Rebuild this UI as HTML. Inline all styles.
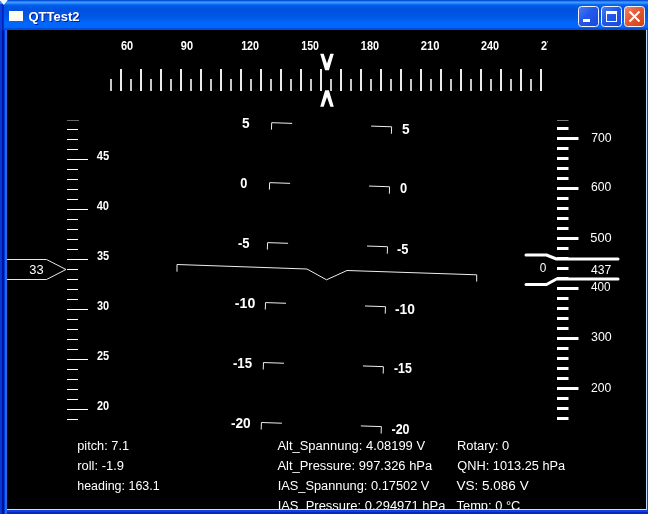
<!DOCTYPE html>
<html><head><meta charset="utf-8"><style>
html,body{margin:0;padding:0;width:648px;height:514px;overflow:hidden;background:#fff;}
svg{display:block;will-change:transform}
text{font-family:"Liberation Sans",sans-serif;}
</style></head><body>
<svg width="648" height="514" viewBox="0 0 648 514">
<defs>
<linearGradient id="tb" x1="0" y1="0" x2="0" y2="1">
<stop offset="0" stop-color="#0040c8"/>
<stop offset="0.04" stop-color="#0a6cf8"/>
<stop offset="0.08" stop-color="#3a96ff"/>
<stop offset="0.14" stop-color="#0a6af5"/>
<stop offset="0.2" stop-color="#0058e8"/>
<stop offset="0.5" stop-color="#0052e2"/>
<stop offset="0.75" stop-color="#0064fa"/>
<stop offset="0.88" stop-color="#0068ff"/>
<stop offset="0.94" stop-color="#0050e0"/>
<stop offset="1" stop-color="#0038c8"/>
</linearGradient>
<linearGradient id="btn" x1="0" y1="0" x2="1" y2="1">
<stop offset="0" stop-color="#4a7cf4"/>
<stop offset="0.45" stop-color="#2258ea"/>
<stop offset="1" stop-color="#1848d8"/>
</linearGradient>
<linearGradient id="cls" x1="0" y1="0" x2="1" y2="1">
<stop offset="0" stop-color="#f08a70"/>
<stop offset="0.4" stop-color="#e65c38"/>
<stop offset="1" stop-color="#d04010"/>
</linearGradient>
<clipPath id="hdg"><rect x="105" y="30" width="443" height="80"/></clipPath>
</defs>

<rect x="0" y="0" width="648" height="514" fill="#0a4ee0"/>
<rect x="0" y="0" width="648" height="1" fill="#0850d8"/>
<rect x="0" y="1" width="648" height="1" fill="#2a80f0"/>
<rect x="0" y="2" width="648" height="1" fill="#3898ff"/>
<rect x="0" y="3" width="648" height="1" fill="#2a88f8"/>
<rect x="0" y="4" width="648" height="1" fill="#0a6af0"/>
<rect x="0" y="5" width="648" height="1" fill="#005ef0"/>
<rect x="0" y="6" width="648" height="1" fill="#0058e8"/>
<rect x="0" y="7" width="648" height="1" fill="#0056e4"/>
<rect x="0" y="8" width="648" height="1" fill="#0052e0"/>
<rect x="0" y="9" width="648" height="1" fill="#0052e0"/>
<rect x="0" y="10" width="648" height="1" fill="#0052e0"/>
<rect x="0" y="11" width="648" height="1" fill="#0054e0"/>
<rect x="0" y="12" width="648" height="1" fill="#0054e0"/>
<rect x="0" y="13" width="648" height="1" fill="#0055e2"/>
<rect x="0" y="14" width="648" height="1" fill="#0056e2"/>
<rect x="0" y="15" width="648" height="1" fill="#0057e4"/>
<rect x="0" y="16" width="648" height="1" fill="#0058e4"/>
<rect x="0" y="17" width="648" height="1" fill="#0059e6"/>
<rect x="0" y="18" width="648" height="1" fill="#005cec"/>
<rect x="0" y="19" width="648" height="1" fill="#005ef0"/>
<rect x="0" y="20" width="648" height="1" fill="#0060f4"/>
<rect x="0" y="21" width="648" height="1" fill="#0064fa"/>
<rect x="0" y="22" width="648" height="1" fill="#0066fc"/>
<rect x="0" y="23" width="648" height="1" fill="#0066fc"/>
<rect x="0" y="24" width="648" height="1" fill="#0066fc"/>
<rect x="0" y="25" width="648" height="1" fill="#0066fc"/>
<rect x="0" y="26" width="648" height="1" fill="#0066fc"/>
<rect x="0" y="27" width="648" height="1" fill="#0064fa"/>
<rect x="0" y="28" width="648" height="1" fill="#0050e0"/>
<rect x="0" y="29" width="648" height="1" fill="#1048c0"/>
<rect x="0" y="30" width="1" height="484" fill="#0a3cd0"/>
<rect x="1" y="30" width="1" height="484" fill="#0a35c8"/>
<rect x="2" y="30" width="1" height="484" fill="#0010a0"/>
<rect x="3" y="30" width="1" height="484" fill="#0012a0"/>
<rect x="4" y="30" width="1" height="484" fill="#0038e0"/>
<rect x="5" y="30" width="1" height="484" fill="#2262ff"/>
<rect x="6" y="30" width="1" height="484" fill="#2868e0"/>
<rect x="7" y="30" width="1" height="484" fill="#000828"/>
<rect x="646" y="30" width="1" height="480" fill="#c0dcff"/>
<rect x="647" y="30" width="1" height="484" fill="#1e4896"/>
<rect x="7" y="510" width="641" height="2" fill="#1040e0"/>
<rect x="7" y="512" width="641" height="2" fill="#0828c0"/>
<rect x="0" y="4" width="2" height="26" fill="#0a40d8"/>
<rect x="2" y="4" width="1" height="26" fill="#0024c0"/>
<rect x="3" y="4" width="1" height="26" fill="#0030d0"/>
<polygon points="-0.5,-0.3 8,-0.3 3.8,5" fill="#f4f8ff"/>
<rect x="8" y="30" width="638" height="479" fill="#000"/>
<rect x="7" y="509" width="640" height="1" fill="#d0e0ff"/>
<rect x="9" y="11" width="14" height="10" fill="#fffef0"/>
<text x="29.5" y="22.3" font-size="13" font-weight="bold" fill="#0a1e9a">QTTest2</text>
<text x="28.5" y="21.3" font-size="13" font-weight="bold" fill="#fff">QTTest2</text>
<rect x="578.5" y="6.5" width="20" height="20" rx="3" ry="3" fill="url(#btn)" stroke="#f0f4ff" stroke-width="1"/>
<rect x="601.5" y="6.5" width="20" height="20" rx="3" ry="3" fill="url(#btn)" stroke="#f0f4ff" stroke-width="1"/>
<rect x="624.5" y="6.5" width="20" height="20" rx="3" ry="3" fill="url(#cls)" stroke="#f0f4ff" stroke-width="1"/>
<rect x="583" y="19" width="7" height="3" fill="#fff"/>
<rect x="606.5" y="11.5" width="10" height="10" fill="none" stroke="#fff" stroke-width="1"/><rect x="606" y="11" width="11" height="3" fill="#fff"/>
<path d="M629.5,11.5 L639.5,21.5 M639.5,11.5 L629.5,21.5" stroke="#fff" stroke-width="2"/>
<g clip-path="url(#hdg)">
<rect x="110" y="79" width="2" height="12" fill="#c8c8c8"/>
<rect x="120" y="69" width="2" height="22" fill="#ececec"/>
<rect x="130" y="79" width="2" height="12" fill="#c8c8c8"/>
<rect x="140" y="69" width="2" height="22" fill="#ececec"/>
<rect x="150" y="79" width="2" height="12" fill="#c8c8c8"/>
<rect x="160" y="69" width="2" height="22" fill="#ececec"/>
<rect x="170" y="79" width="2" height="12" fill="#c8c8c8"/>
<rect x="180" y="69" width="2" height="22" fill="#ececec"/>
<rect x="190" y="79" width="2" height="12" fill="#c8c8c8"/>
<rect x="200" y="69" width="2" height="22" fill="#ececec"/>
<rect x="210" y="79" width="2" height="12" fill="#c8c8c8"/>
<rect x="220" y="69" width="2" height="22" fill="#ececec"/>
<rect x="230" y="79" width="2" height="12" fill="#c8c8c8"/>
<rect x="240" y="69" width="2" height="22" fill="#ececec"/>
<rect x="250" y="79" width="2" height="12" fill="#c8c8c8"/>
<rect x="260" y="69" width="2" height="22" fill="#ececec"/>
<rect x="270" y="79" width="2" height="12" fill="#c8c8c8"/>
<rect x="280" y="69" width="2" height="22" fill="#ececec"/>
<rect x="290" y="79" width="2" height="12" fill="#c8c8c8"/>
<rect x="300" y="69" width="2" height="22" fill="#ececec"/>
<rect x="310" y="79" width="2" height="12" fill="#c8c8c8"/>
<rect x="320" y="69" width="2" height="22" fill="#ececec"/>
<rect x="330" y="79" width="2" height="12" fill="#c8c8c8"/>
<rect x="340" y="69" width="2" height="22" fill="#ececec"/>
<rect x="350" y="79" width="2" height="12" fill="#c8c8c8"/>
<rect x="360" y="69" width="2" height="22" fill="#ececec"/>
<rect x="370" y="79" width="2" height="12" fill="#c8c8c8"/>
<rect x="380" y="69" width="2" height="22" fill="#ececec"/>
<rect x="390" y="79" width="2" height="12" fill="#c8c8c8"/>
<rect x="400" y="69" width="2" height="22" fill="#ececec"/>
<rect x="410" y="79" width="2" height="12" fill="#c8c8c8"/>
<rect x="420" y="69" width="2" height="22" fill="#ececec"/>
<rect x="430" y="79" width="2" height="12" fill="#c8c8c8"/>
<rect x="440" y="69" width="2" height="22" fill="#ececec"/>
<rect x="450" y="79" width="2" height="12" fill="#c8c8c8"/>
<rect x="460" y="69" width="2" height="22" fill="#ececec"/>
<rect x="470" y="79" width="2" height="12" fill="#c8c8c8"/>
<rect x="480" y="69" width="2" height="22" fill="#ececec"/>
<rect x="490" y="79" width="2" height="12" fill="#c8c8c8"/>
<rect x="500" y="69" width="2" height="22" fill="#ececec"/>
<rect x="510" y="79" width="2" height="12" fill="#c8c8c8"/>
<rect x="520" y="69" width="2" height="22" fill="#ececec"/>
<rect x="530" y="79" width="2" height="12" fill="#c8c8c8"/>
<rect x="540" y="69" width="2" height="22" fill="#ececec"/>
<text x="121.00" y="50.22" font-size="12.5" font-weight="bold" fill="#fff" textLength="12.20" lengthAdjust="spacingAndGlyphs">60</text>
<text x="180.86" y="50.41" font-size="12.5" font-weight="bold" fill="#fff" textLength="12.20" lengthAdjust="spacingAndGlyphs">90</text>
<text x="241.14" y="50.45" font-size="12.5" font-weight="bold" fill="#fff" textLength="17.92" lengthAdjust="spacingAndGlyphs">120</text>
<text x="301.28" y="50.44" font-size="12.5" font-weight="bold" fill="#fff" textLength="17.60" lengthAdjust="spacingAndGlyphs">150</text>
<text x="360.83" y="50.36" font-size="12.5" font-weight="bold" fill="#fff" textLength="18.15" lengthAdjust="spacingAndGlyphs">180</text>
<text x="420.72" y="50.36" font-size="12.5" font-weight="bold" fill="#fff" textLength="18.78" lengthAdjust="spacingAndGlyphs">210</text>
<text x="481.07" y="50.15" font-size="12.5" font-weight="bold" fill="#fff" textLength="18.08" lengthAdjust="spacingAndGlyphs">240</text>
<text x="541.07" y="50.15" font-size="12.5" font-weight="bold" fill="#fff" textLength="18.08" lengthAdjust="spacingAndGlyphs">270</text>
</g>
<polygon points="320.2,53.7 323.7,53.7 327,63.5 330.3,53.7 333.8,53.7 328.9,70.2 325.1,70.2" fill="#fff"/>
<polygon points="320.2,106.7 323.7,106.7 327,96.9 330.3,106.7 333.8,106.7 328.9,90.2 325.1,90.2" fill="#fff"/>
<rect x="67" y="120" width="12" height="1" fill="#666"/>
<rect x="67" y="129" width="11" height="1" fill="#fff"/>
<rect x="67" y="139" width="11" height="1" fill="#fff"/>
<rect x="67" y="149" width="11" height="1" fill="#fff"/>
<rect x="67" y="159" width="21" height="1" fill="#fff"/>
<rect x="67" y="169" width="11" height="1" fill="#fff"/>
<rect x="67" y="179" width="11" height="1" fill="#fff"/>
<rect x="67" y="189" width="11" height="1" fill="#fff"/>
<rect x="67" y="199" width="11" height="1" fill="#fff"/>
<rect x="67" y="209" width="21" height="1" fill="#fff"/>
<rect x="67" y="219" width="11" height="1" fill="#fff"/>
<rect x="67" y="229" width="11" height="1" fill="#fff"/>
<rect x="67" y="239" width="11" height="1" fill="#fff"/>
<rect x="67" y="249" width="11" height="1" fill="#fff"/>
<rect x="67" y="259" width="21" height="1" fill="#fff"/>
<rect x="67" y="269" width="11" height="1" fill="#fff"/>
<rect x="67" y="279" width="11" height="1" fill="#fff"/>
<rect x="67" y="289" width="11" height="1" fill="#fff"/>
<rect x="67" y="299" width="11" height="1" fill="#fff"/>
<rect x="67" y="309" width="21" height="1" fill="#fff"/>
<rect x="67" y="319" width="11" height="1" fill="#fff"/>
<rect x="67" y="329" width="11" height="1" fill="#fff"/>
<rect x="67" y="339" width="11" height="1" fill="#fff"/>
<rect x="67" y="349" width="11" height="1" fill="#fff"/>
<rect x="67" y="359" width="21" height="1" fill="#fff"/>
<rect x="67" y="369" width="11" height="1" fill="#fff"/>
<rect x="67" y="379" width="11" height="1" fill="#fff"/>
<rect x="67" y="389" width="11" height="1" fill="#fff"/>
<rect x="67" y="399" width="11" height="1" fill="#fff"/>
<rect x="67" y="409" width="21" height="1" fill="#fff"/>
<rect x="67" y="419" width="11" height="1" fill="#fff"/>
<text x="96.79" y="160.00" font-size="12.5" font-weight="bold" fill="#fff" textLength="12.41" lengthAdjust="spacingAndGlyphs">45</text>
<text x="96.72" y="209.67" font-size="12.5" font-weight="bold" fill="#fff" textLength="12.27" lengthAdjust="spacingAndGlyphs">40</text>
<text x="97.00" y="260.00" font-size="12.5" font-weight="bold" fill="#fff" textLength="12.20" lengthAdjust="spacingAndGlyphs">35</text>
<text x="97.00" y="310.00" font-size="12.5" font-weight="bold" fill="#fff" textLength="12.20" lengthAdjust="spacingAndGlyphs">30</text>
<text x="97.00" y="360.00" font-size="12.5" font-weight="bold" fill="#fff" textLength="12.20" lengthAdjust="spacingAndGlyphs">25</text>
<text x="97.00" y="410.00" font-size="12.5" font-weight="bold" fill="#fff" textLength="12.20" lengthAdjust="spacingAndGlyphs">20</text>
<path d="M7,259.5 L46.5,259.5 L66,269.5 L46.5,279.5 L7,279.5" fill="none" stroke="#e8e8e8" stroke-width="1"/>
<text x="29.30" y="274.30" font-size="13" font-weight="normal" fill="#fff" textLength="14.35" lengthAdjust="spacingAndGlyphs">33</text>
<rect x="557" y="120" width="11.5" height="1" fill="#777"/>
<rect x="557" y="127" width="11.5" height="3" fill="#fff"/>
<rect x="557" y="137" width="21.5" height="3" fill="#fff"/>
<rect x="557" y="147" width="11.5" height="3" fill="#fff"/>
<rect x="557" y="157" width="11.5" height="3" fill="#fff"/>
<rect x="557" y="167" width="11.5" height="3" fill="#fff"/>
<rect x="557" y="177" width="11.5" height="3" fill="#fff"/>
<rect x="557" y="187" width="21.5" height="3" fill="#fff"/>
<rect x="557" y="197" width="11.5" height="3" fill="#fff"/>
<rect x="557" y="207" width="11.5" height="3" fill="#fff"/>
<rect x="557" y="217" width="11.5" height="3" fill="#fff"/>
<rect x="557" y="227" width="11.5" height="3" fill="#fff"/>
<rect x="557" y="237" width="21.5" height="3" fill="#fff"/>
<rect x="557" y="247" width="11.5" height="3" fill="#fff"/>
<rect x="557" y="257" width="11.5" height="3" fill="#fff"/>
<rect x="557" y="267" width="11.5" height="3" fill="#fff"/>
<rect x="557" y="277" width="11.5" height="3" fill="#fff"/>
<rect x="557" y="287" width="21.5" height="3" fill="#fff"/>
<rect x="557" y="297" width="11.5" height="3" fill="#fff"/>
<rect x="557" y="307" width="11.5" height="3" fill="#fff"/>
<rect x="557" y="317" width="11.5" height="3" fill="#fff"/>
<rect x="557" y="327" width="11.5" height="3" fill="#fff"/>
<rect x="557" y="337" width="21.5" height="3" fill="#fff"/>
<rect x="557" y="347" width="11.5" height="3" fill="#fff"/>
<rect x="557" y="357" width="11.5" height="3" fill="#fff"/>
<rect x="557" y="367" width="11.5" height="3" fill="#fff"/>
<rect x="557" y="377" width="11.5" height="3" fill="#fff"/>
<rect x="557" y="387" width="21.5" height="3" fill="#fff"/>
<rect x="557" y="397" width="11.5" height="3" fill="#fff"/>
<rect x="557" y="407" width="11.5" height="3" fill="#fff"/>
<rect x="557" y="417" width="11.5" height="3" fill="#fff"/>
<text x="591.21" y="141.58" font-size="13" font-weight="normal" fill="#fff" textLength="20.39" lengthAdjust="spacingAndGlyphs">700</text>
<text x="591.07" y="191.39" font-size="13" font-weight="normal" fill="#fff" textLength="20.30" lengthAdjust="spacingAndGlyphs">600</text>
<text x="590.37" y="241.86" font-size="13" font-weight="normal" fill="#fff" textLength="21.40" lengthAdjust="spacingAndGlyphs">500</text>
<text x="591.00" y="291.21" font-size="13" font-weight="normal" fill="#fff" textLength="19.55" lengthAdjust="spacingAndGlyphs">400</text>
<text x="591.07" y="341.39" font-size="13" font-weight="normal" fill="#fff" textLength="20.70" lengthAdjust="spacingAndGlyphs">300</text>
<text x="591.07" y="391.86" font-size="13" font-weight="normal" fill="#fff" textLength="20.30" lengthAdjust="spacingAndGlyphs">200</text>
<path d="M526,255 L546.5,255 L556.5,259 L618,259" fill="none" stroke="#fff" stroke-width="3" stroke-linecap="round" stroke-linejoin="round"/>
<path d="M526,284.5 L546.5,284.5 L556.5,279 L618,279" fill="none" stroke="#fff" stroke-width="3" stroke-linecap="round" stroke-linejoin="round"/>
<text x="539.70" y="272.14" font-size="13" font-weight="normal" fill="#fff" textLength="6.60" lengthAdjust="spacingAndGlyphs">0</text>
<text x="591.00" y="274.46" font-size="13" font-weight="normal" fill="#fff" textLength="20.25" lengthAdjust="spacingAndGlyphs">437</text>
<path d="M271.45,129.68 L271.69,122.68 L292.18,123.38" fill="none" stroke="#eee" stroke-width="1"/>
<path d="M371.13,126.09 L391.62,126.79 L391.38,133.78" fill="none" stroke="#eee" stroke-width="1"/>
<text x="242.09" y="127.54" font-size="14" font-weight="bold" fill="#fff" textLength="7.60" lengthAdjust="spacingAndGlyphs">5</text>
<text x="402.02" y="133.72" font-size="14" font-weight="bold" fill="#fff" textLength="7.60" lengthAdjust="spacingAndGlyphs">5</text>
<path d="M269.40,189.64 L269.64,182.65 L290.12,183.35" fill="none" stroke="#eee" stroke-width="1"/>
<path d="M369.08,186.05 L389.56,186.75 L389.33,193.75" fill="none" stroke="#eee" stroke-width="1"/>
<text x="240.25" y="188.30" font-size="14" font-weight="bold" fill="#fff" textLength="7.09" lengthAdjust="spacingAndGlyphs">0</text>
<text x="399.96" y="193.40" font-size="14" font-weight="bold" fill="#fff" textLength="7.16" lengthAdjust="spacingAndGlyphs">0</text>
<path d="M267.34,249.61 L267.58,242.61 L288.07,243.31" fill="none" stroke="#eee" stroke-width="1"/>
<path d="M367.02,246.02 L387.51,246.72 L387.27,253.71" fill="none" stroke="#eee" stroke-width="1"/>
<text x="237.98" y="248.44" font-size="14" font-weight="bold" fill="#fff" textLength="11.60" lengthAdjust="spacingAndGlyphs">-5</text>
<text x="397.00" y="253.56" font-size="14" font-weight="bold" fill="#fff" textLength="11.46" lengthAdjust="spacingAndGlyphs">-5</text>
<path d="M265.29,309.57 L265.53,302.58 L286.02,303.28" fill="none" stroke="#eee" stroke-width="1"/>
<path d="M364.97,305.98 L385.46,306.68 L385.22,313.68" fill="none" stroke="#eee" stroke-width="1"/>
<text x="234.88" y="308.41" font-size="14" font-weight="bold" fill="#fff" textLength="20.37" lengthAdjust="spacingAndGlyphs">-10</text>
<text x="395.02" y="313.84" font-size="14" font-weight="bold" fill="#fff" textLength="19.88" lengthAdjust="spacingAndGlyphs">-10</text>
<path d="M263.24,369.54 L263.48,362.54 L283.97,363.24" fill="none" stroke="#eee" stroke-width="1"/>
<path d="M362.92,365.95 L383.41,366.65 L383.17,373.64" fill="none" stroke="#eee" stroke-width="1"/>
<text x="232.90" y="368.45" font-size="14" font-weight="bold" fill="#fff" textLength="19.11" lengthAdjust="spacingAndGlyphs">-15</text>
<text x="393.88" y="373.30" font-size="14" font-weight="bold" fill="#fff" textLength="17.92" lengthAdjust="spacingAndGlyphs">-15</text>
<path d="M261.19,429.50 L261.43,422.51 L281.91,423.21" fill="none" stroke="#eee" stroke-width="1"/>
<path d="M360.87,425.91 L381.36,426.61 L381.12,433.61" fill="none" stroke="#eee" stroke-width="1"/>
<text x="230.92" y="428.34" font-size="14" font-weight="bold" fill="#fff" textLength="19.81" lengthAdjust="spacingAndGlyphs">-20</text>
<text x="391.48" y="433.77" font-size="14" font-weight="bold" fill="#fff" textLength="18.06" lengthAdjust="spacingAndGlyphs">-20</text>
<path d="M177,271.7 L177,264.5 L307,269 L326.5,279.8 L347,270.5 L476.7,274.8 L476.7,281.6" fill="none" stroke="#eee" stroke-width="1"/>
<text x="77.26" y="450.00" font-size="12.5" font-weight="normal" fill="#fff" textLength="51.83" lengthAdjust="spacingAndGlyphs">pitch: 7.1</text>
<text x="77.26" y="470.00" font-size="12.5" font-weight="normal" fill="#fff" textLength="46.71" lengthAdjust="spacingAndGlyphs">roll: -1.9</text>
<text x="77.26" y="490.00" font-size="12.5" font-weight="normal" fill="#fff" textLength="82.36" lengthAdjust="spacingAndGlyphs">heading: 163.1</text>
<text x="277.41" y="450.00" font-size="12.5" font-weight="normal" fill="#fff" textLength="147.65" lengthAdjust="spacingAndGlyphs">Alt_Spannung: 4.08199 V</text>
<text x="277.41" y="470.00" font-size="12.5" font-weight="normal" fill="#fff" textLength="154.77" lengthAdjust="spacingAndGlyphs">Alt_Pressure: 997.326 hPa</text>
<text x="277.65" y="490.00" font-size="12.5" font-weight="normal" fill="#fff" textLength="151.76" lengthAdjust="spacingAndGlyphs">IAS_Spannung: 0.17502 V</text>
<text x="457.03" y="450.00" font-size="12.5" font-weight="normal" fill="#fff" textLength="52.24" lengthAdjust="spacingAndGlyphs">Rotary: 0</text>
<text x="457.32" y="470.00" font-size="12.5" font-weight="normal" fill="#fff" textLength="107.89" lengthAdjust="spacingAndGlyphs">QNH: 1013.25 hPa</text>
<text x="456.56" y="490.00" font-size="12.5" font-weight="normal" fill="#fff" textLength="72.11" lengthAdjust="spacingAndGlyphs">VS: 5.086 V</text>
<svg x="0" y="0" width="648" height="509">
<text x="277.65" y="510.00" font-size="12.5" font-weight="normal" fill="#fff" textLength="167.70" lengthAdjust="spacingAndGlyphs">IAS_Pressure: 0.294971 hPa</text>
<text x="456.56" y="510.00" font-size="12.5" font-weight="normal" fill="#fff" textLength="63.82" lengthAdjust="spacingAndGlyphs">Temp: 0 °C</text>
</svg>
</svg></body></html>
